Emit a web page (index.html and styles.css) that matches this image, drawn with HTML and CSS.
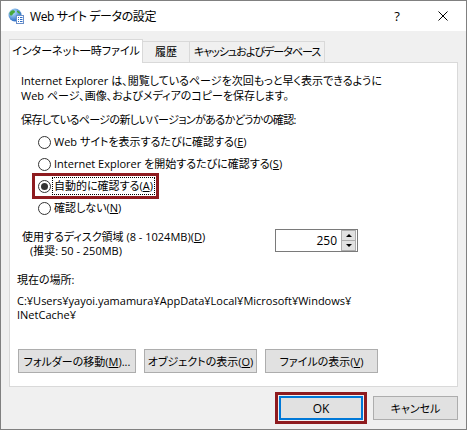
FILE: index.html
```html
<!DOCTYPE html>
<html lang="ja">
<head>
  <meta charset="UTF-8">
  <title>Web サイト データの設定</title>
  <link rel="stylesheet" href="styles.css">
</head>
<body>

  <div class="window">
    <div class="titlebar">
      <svg class="app-icon" width="16" height="16" viewBox="0 0 16 16">
        <defs>
          <radialGradient id="globe" cx="35%" cy="30%" r="75%">
            <stop offset="0" stop-color="#bfe8ff"/>
            <stop offset="1" stop-color="#1f63c0"/>
          </radialGradient>
        </defs>
        <circle cx="7" cy="7" r="6.5" fill="url(#globe)"/>
        <path d="M2.5 3.5 C4 1.8 6.5 2 7 3.5 C7 5 5.5 5 4.8 6.2 C4.3 7.5 3 8 2 7 C1.2 5.8 1.6 4.5 2.5 3.5Z" fill="#47a83a"/>
        <path d="M9 2.5 C10.5 2.8 12 4 12.3 5.5 C11 5.8 9.8 5 9 3.8Z" fill="#47a83a"/>
        <rect x="8.5" y="7.5" width="7" height="8" fill="#fff" stroke="#6b8fc9"/>
        <path d="M10 9.5h1M12 9.5h2.5M10 11.5h1M12 11.5h2.5M10 13.5h1M12 13.5h2.5" stroke="#2f6cc4"/>
      </svg>
      <span class="title">Web サイト データの設定</span>
      <span class="cap-btn">?</span>
      <span class="cap-btn">
        <svg width="10" height="10" viewBox="0 0 10 10">
          <path d="M0.5 0.5L9.5 9.5M9.5 0.5L0.5 9.5" stroke="#000" stroke-width="1"/>
        </svg>
      </span>
    </div>

    <div class="client">
      <div class="tabs">
        <div class="tab active">インターネット一時ファイル</div>
        <div class="tab tab-history">履歴</div>
        <div class="tab tab-cache">キャッシュおよびデータベース</div>
      </div>

      <div class="panel">
        <p class="intro">Internet Explorer は、閲覧しているページを次回もっと早く表示できるように<br>Web ページ、画像、およびメディアのコピーを保存します。</p>

        <p class="group-label">保存しているページの新しいバージョンがあるかどうかの確認:</p>

        <div class="radios">
          <div class="radio-row">
            <span class="radio"><span class="dot"></span>Web サイトを表示するたびに確認する(<u>E</u>)</span>
          </div>
          <div class="radio-row">
            <span class="radio"><span class="dot"></span>Internet Explorer を開始するたびに確認する(<u>S</u>)</span>
          </div>
          <div class="radio-row">
            <span class="radio selected"><span class="dot checked"></span><span class="focus-text">自動的に確認する(<u>A</u>)</span></span>
          </div>
          <div class="radio-row">
            <span class="radio"><span class="dot"></span>確認しない(<u>N</u>)</span>
          </div>
        </div>

        <div class="disk-row">
          <div class="disk-label">
            使用するディスク領域 (8 - 1024MB)(<u>D</u>)<br>
            <span class="sub">(推奨: 50 - 250MB)</span>
          </div>
          <div class="spin">
            <span class="spin-value">250</span>
            <span class="spin-btns">
              <span class="spin-btn"><span class="arrow up"></span></span>
              <span class="spin-btn"><span class="arrow down"></span></span>
            </span>
          </div>
        </div>

        <p class="loc-label">現在の場所:</p>
        <p class="path">C:¥Users¥yayoi.yamamura¥AppData¥Local¥Microsoft¥Windows¥<br>INetCache¥</p>

        <div class="btn-row">
          <button class="btn btn-move">フォルダーの移動(<u>M</u>)...</button>
          <button class="btn btn-obj">オブジェクトの表示(<u>O</u>)</button>
          <button class="btn btn-files">ファイルの表示(<u>V</u>)</button>
        </div>
      </div>

      <div class="footer">
        <span class="ok-frame"><button class="btn ok">OK</button></span>
        <button class="btn cancel">キャンセル</button>
      </div>
    </div>
  </div>

</body>
</html>
```

FILE: styles.css
```css
* {
  box-sizing: border-box;
}

body {
  margin: 0;
  font-family: "Open Sans", "Noto Sans CJK JP", sans-serif;
  font-size: 11px;
  font-feature-settings: "palt";
  color: #000;
  white-space: nowrap;
}

p {
  margin: 0;
}

u {
  text-underline-offset: 1px;
}

.window {
  width: 467px;
  height: 430px;
  border: 1px solid #808080;
  background: #f0f0f0;
  display: flex;
  flex-direction: column;
}

/* title bar */

.titlebar {
  height: 30px;
  background: #fff;
  display: flex;
  align-items: center;
}

.app-icon {
  margin-left: 7px;
}

.title {
  margin-left: 6px;
  flex: 1;
  font-size: 12px;
  letter-spacing: -0.4px;
}

.cap-btn {
  width: 46px;
  height: 30px;
  display: flex;
  align-items: center;
  justify-content: center;
  font-size: 13px;
}

/* tabs + page */

.client {
  flex: 1;
  padding: 8px 8px 0;
  display: flex;
  flex-direction: column;
}

.tabs {
  display: flex;
  align-items: flex-end;
  height: 23px;
}

.tab {
  height: 21px;
  margin-left: -1px;
  border: 1px solid #d9d9d9;
  border-bottom: none;
  background: #f0f0f0;
  text-align: center;
  line-height: 19px;
}

.tab.active {
  width: 134px;
  height: 24px;
  margin-left: 0;
  margin-bottom: -1px;
  background: #fff;
  line-height: 22px;
  position: relative;
  z-index: 1;
}

.tab-history {
  width: 48px;
}

.tab-cache {
  width: 136px;
  letter-spacing: -1px;
}

.panel {
  height: 325px;
  background: #fff;
  border: 1px solid #d9d9d9;
  padding: 10px 7px 0;
}

.intro {
  margin-left: 4px;
  line-height: 15px;
}

.group-label {
  margin: 9px 0 0 4px;
  line-height: 15px;
  letter-spacing: -0.6px;
}

/* radio list */

.radios {
  margin: 4px 0 0 21px;
}

.radio-row {
  height: 22px;
  display: flex;
  align-items: center;
}

.radio {
  display: inline-flex;
  align-items: center;
  height: 14px;
  line-height: 14px;
}

.radio.selected {
  outline: 3px solid #8e1b1f;
  outline-offset: 3px;
}

.dot {
  width: 13px;
  height: 13px;
  margin-right: 3px;
  border: 1px solid #333;
  border-radius: 50%;
  background: #fff;
  display: flex;
  align-items: center;
  justify-content: center;
}

.dot.checked::after {
  content: "";
  width: 7px;
  height: 7px;
  border-radius: 50%;
  background: #333;
}

.focus-text {
  outline: 1px dotted #000;
  outline-offset: 1px;
}

/* disk size */

.disk-row {
  display: flex;
  margin: 11px 0 0 5px;
}

.disk-label {
  width: 253px;
  line-height: 14px;
}

.disk-label .sub {
  padding-left: 8px;
}

.spin {
  width: 83px;
  height: 23px;
  margin-top: -1px;
  border: 1px solid #7a7a7a;
  background: #fff;
  display: flex;
}

.spin-value {
  flex: 1;
  text-align: right;
  padding-right: 4px;
  line-height: 21px;
  font-size: 12px;
}

.spin-btns {
  width: 16px;
  padding: 0 1px 0 0;
  display: flex;
  flex-direction: column;
}

.spin-btn {
  flex: 1;
  border: 1px solid #adadad;
  background: #e1e1e1;
  display: flex;
  align-items: center;
  justify-content: center;
}

.spin-btn + .spin-btn {
  border-top: none;
}

.arrow {
  width: 0;
  height: 0;
  border-left: 3px solid transparent;
  border-right: 3px solid transparent;
}

.arrow.up {
  border-bottom: 3px solid #000;
}

.arrow.down {
  border-top: 3px solid #000;
}

/* cache folder */

.loc-label {
  margin-top: 15px;
  line-height: 14px;
}

.path {
  margin-top: 7px;
  line-height: 14px;
}

.btn-row {
  display: flex;
  gap: 8px;
  margin: 27px 0 0 1px;
}

.btn {
  height: 24px;
  padding: 0;
  border: 1px solid #adadad;
  background: #e1e1e1;
  font: inherit;
  color: #000;
}

.btn-move {
  width: 118px;
}

.btn-obj {
  width: 113px;
}

.btn-files {
  width: 113px;
}

/* dialog buttons */

.footer {
  display: flex;
  justify-content: flex-end;
  align-items: center;
  gap: 6px;
  padding-top: 5px;
}

.ok-frame {
  display: flex;
  padding: 1px;
  border: 3px solid #8e1b1f;
}

.ok {
  width: 84px;
  border: 2px solid #0078d7;
  font-size: 12px;
}

.cancel {
  width: 85px;
}
```
